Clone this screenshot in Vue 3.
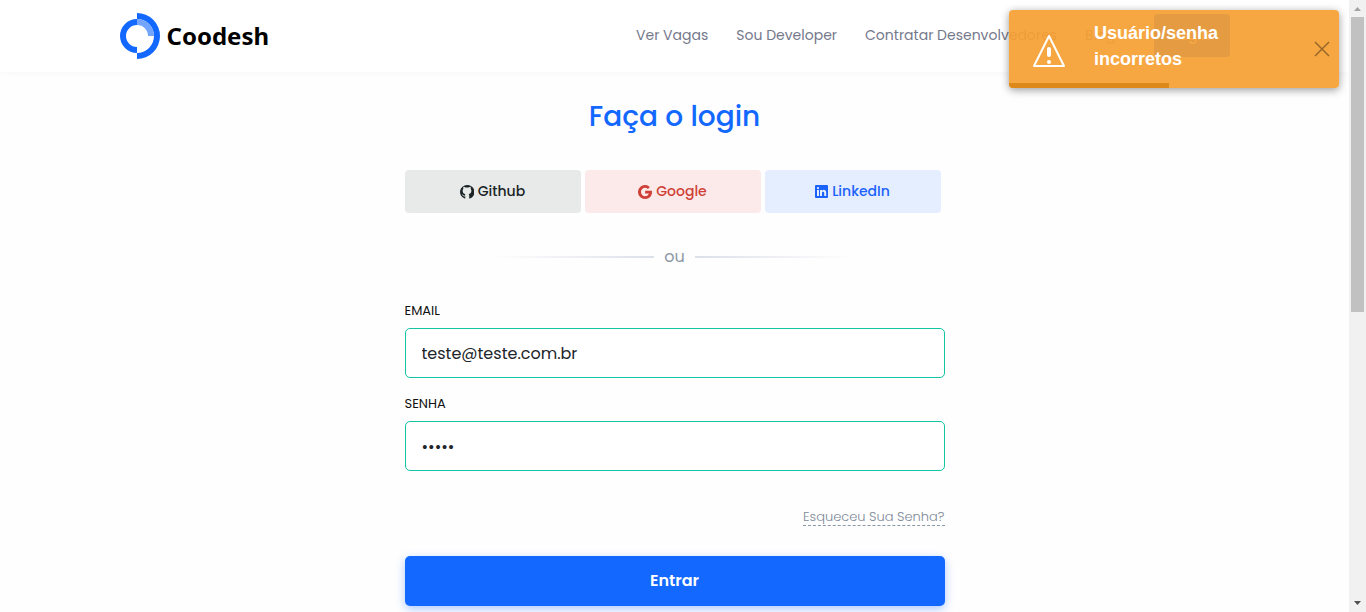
<script setup>
import { ref } from 'vue'

const email = ref('teste@teste.com.br')
const password = ref('teste')
const progress = ref(160 / 330)
const links = ['Ver Vagas', 'Sou Developer', 'Contratar Desenvolvedores', 'Blog']
const toastOpen = ref(true)
</script>

<template>
  <div class="window">
    <div class="page">
      <header class="header">
        <div class="container">
          <a class="brand" href="#">
            <svg class="brand-mark" width="40" height="46" viewBox="0 0 40 46" aria-hidden="true">
              <path d="M17 6A17 17 0 0 0 17 40V34A11 11 0 0 1 17 12Z" fill="#1268ff" />
              <path d="M17 0A23 23 0 0 1 17 46V40A17 17 0 0 0 17 6Z" fill="#1268ff" />
              <path d="M17 6A17 17 0 0 1 34 23H28A11 11 0 0 0 17 12Z" fill="#73a5ff" />
            </svg>
            <span>Coodesh</span>
          </a>
          <nav class="nav">
            <a v-for="link in links" :key="link" href="#">{{ link }}</a>
            <button class="login" type="button">Login</button>
          </nav>
        </div>
      </header>

      <main class="main">
        <h1>Faça o login</h1>
        <div class="social">
          <button class="github" type="button">
            <svg width="14" height="14" viewBox="0 0 24 24" aria-hidden="true">
              <path fill="currentColor" d="M12 0a12 12 0 0 0-4 23.3c.7.2 1-.3 1-.7v-4.100c-.5-1-.7-2 .2-3.100C6 15 4.500 13.400 4.500 9.800c0-1.300.5-2.500 1.300-3.400-.4-1-.3-2.400.2-3.300 1.200 0 2.500.7 3.400 1.300a11 11 0 0 1 5.200 0C15.500 3.800 16.800 3.100 18 3.100c.5.9.6 2.300.2 3.300.8.9 1.300 2.100 1.300 3.400 0 3.600-1.500 5.200-4.700 5.600.7.700 1 1.500 1 2.700v4.500c0 .4.300.9 1 .7A12 12 0 0 0 12 0Z" />
              <path d="M3.500 16.500c1.800.1 1.800 3.300 5.500 2.500" fill="none" stroke="#e7eae9" stroke-width="1.500" />
            </svg>
            Github
          </button>
          <button class="google" type="button">
            <svg width="14" height="14" viewBox="0 0 24 24" aria-hidden="true">
              <path fill="currentColor" d="M12.200 10v4.400h6.400c-.7 2.800-3 4.700-6.400 4.700a7.100 7.100 0 0 1 0-14.200c1.900 0 3.400.7 4.700 1.800l3.400-3.400A12 12 0 1 0 12.200 24C19.500 24 24 18.900 24 12c0-.7-.1-1.300-.2-2Z" />
            </svg>
            Google
          </button>
          <button class="linkedin" type="button">
            <svg width="13" height="13" viewBox="0 0 13 13" aria-hidden="true">
              <path fill="currentColor" fill-rule="evenodd" d="M1 0h11q1 0 1 1v11q0 1-1 1H1q-1 0-1-1V1q0-1 1-1ZM2 5v6h2V5ZM3 2a1.100 1.100 0 1 0 0 2.200A1.100 1.100 0 0 0 3 2ZM5 5v6h2V8c0-1.800 2.200-1.800 2.200 0v3h2V7.500c0-3-3.200-3.300-4.200-1.600V5Z" />
            </svg>
            LinkedIn
          </button>
        </div>
        <div class="divider"><span>ou</span></div>
        <form @submit.prevent>
          <label for="email">EMAIL</label>
          <input id="email" v-model="email" type="email" />
          <label for="password">SENHA</label>
          <input id="password" v-model="password" type="password" />
          <a class="forgot" href="#">Esqueceu Sua Senha?</a>
          <button class="submit" type="submit">Entrar</button>
        </form>
      </main>
    </div>

    <div class="scrollbar" aria-hidden="true">
      <svg width="17" height="17" viewBox="0 0 17 17"><path d="M5 11h7L8.500 7Z" fill="#a3a3a3" /></svg>
      <div class="track"><div class="thumb"></div></div>
      <svg width="17" height="17" viewBox="0 0 17 17"><path d="M5 6h7L8.500 10Z" fill="#505050" /></svg>
    </div>

    <div v-if="toastOpen" class="toast" role="alert">
      <svg class="warning" width="34" height="34" viewBox="0 0 34 34" aria-hidden="true">
        <path d="M17 2L32 32H2Z" fill="none" stroke="#fff" stroke-width="2" stroke-linejoin="round" />
        <path d="M17 15V21" stroke="#fff" stroke-width="4" stroke-linecap="round" />
        <circle cx="17" cy="28" r="2" fill="#fff" />
      </svg>
      <strong>Usuário/senha incorretos</strong>
      <button type="button" aria-label="Fechar" @click="toastOpen = false">
        <svg width="16" height="16" viewBox="0 0 16 16"><path d="M1 1L15 15M15 1L1 15" stroke="#986729" stroke-width="1.500" /></svg>
      </button>
      <div class="progress" :style="{ width: progress * 100 + '%' }"></div>
    </div>
  </div>
</template>

<style>
body {
  background: #fefefe;
}
</style>

<style scoped>
* {
  box-sizing: border-box;
}
.window {
  display: flex;
  height: 100vh;
  overflow: hidden;
  font-family: Poppins, Inter, "Open Sans", sans-serif;
  color: #212529;
}
a {
  color: inherit;
  text-decoration: none;
}
button {
  border: 0;
  font-family: inherit;
  cursor: pointer;
}
.page {
  flex: 1;
  min-width: 0;
}
.header {
  height: 72px;
  background: #fff;
  box-shadow: 0 0 8px rgba(0, 0, 0, 0.04);
}
.container {
  display: flex;
  align-items: center;
  justify-content: space-between;
  max-width: 1110px;
  height: 100%;
  margin: 0 auto;
}
.brand {
  display: flex;
  align-items: center;
  gap: 7px;
  font: 700 24px/40px "Noto Sans", "Open Sans", sans-serif;
  color: #000;
}
.nav {
  display: flex;
  align-items: center;
  gap: 28px;
  padding-bottom: 2px;
  font-size: 14px;
  color: #75798b;
  white-space: nowrap;
}
.login {
  width: 76px;
  height: 43px;
  margin-left: 10px;
  border-radius: 4px;
  background: #1268ff;
  color: #fff;
  font-size: 14px;
  font-weight: 500;
}
.main {
  max-width: 540px;
  margin: 0 auto;
  padding-top: 24px;
}
h1 {
  margin: 0;
  font-size: 28px;
  line-height: 42px;
  font-weight: 500;
  text-align: center;
  color: #1268ff;
}
.social {
  display: grid;
  grid-template-columns: repeat(3, 1fr);
  gap: 4px;
  margin-top: 32px;
  padding-right: 4px;
}
.social button {
  display: flex;
  align-items: center;
  justify-content: center;
  gap: 4px;
  height: 43px;
  padding: 0;
  border-radius: 4px;
  font-size: 14px;
  font-weight: 500;
}
.social .github {
  background: #e7eae9;
  color: #1b2426;
}
.social .google {
  background: #fceaea;
  color: #cf3f36;
}
.social .linkedin {
  background: #e5eeff;
  color: #1b62fb;
}
.divider {
  display: flex;
  align-items: center;
  justify-content: center;
  gap: 10px;
  margin-top: 32px;
  font-size: 16px;
  line-height: 24px;
  color: #8d98a5;
}
.divider::before,
.divider::after {
  content: "";
  width: 160px;
  height: 2px;
  background: linear-gradient(to left, #dce0e8, transparent);
}
.divider::after {
  background: linear-gradient(to right, #dce0e8, transparent);
}
form {
  display: flex;
  flex-direction: column;
  margin-top: 32px;
}
label {
  margin-bottom: 7px;
  font-size: 13px;
  line-height: 20px;
  font-weight: 400;
  color: #111;
}
input {
  width: 100%;
  height: 50px;
  margin-bottom: 16px;
  padding: 0 16px;
  border: 1px solid #13c4a3;
  border-radius: 5px;
  outline: 0;
  background: #fff;
  color: #212529;
  font-family: inherit;
  font-size: 16px;
}
.forgot {
  align-self: flex-end;
  margin-top: 22px;
  border-bottom: 1px dashed #8d98a5;
  font-size: 13px;
  line-height: 16px;
  font-weight: 300;
  color: #7d8997;
}
.submit {
  height: 50px;
  margin-top: 30px;
  padding-bottom: 2px;
  border-radius: 5px;
  background: #1268ff;
  box-shadow: 0 3px 10px rgba(18, 104, 255, 0.35);
  color: #fff;
  font-size: 16px;
  font-weight: 600;
}
.scrollbar {
  display: flex;
  flex-direction: column;
  width: 17px;
  background: #f1f1f1;
}
.track {
  flex: 1;
}
.thumb {
  height: 51%;
  margin: 0 2px;
  background: #c1c1c1;
}
.toast {
  position: absolute;
  top: 10px;
  right: 27px;
  display: flex;
  align-items: center;
  width: 330px;
  height: 78px;
  padding: 0 9px 6px 23px;
  overflow: hidden;
  border-radius: 4px;
  background: rgba(246, 160, 50, 0.92);
  box-shadow: 0 2px 8px rgba(0, 0, 0, 0.4);
}
.warning {
  flex: none;
  margin-top: 10px;
}
.toast strong {
  flex: 1;
  margin: 0 50px 0 28px;
  font: 700 18px/26px "Liberation Sans", sans-serif;
  color: #fff;
}
.toast button {
  display: flex;
  margin-top: 6px;
  padding: 0;
  background: none;
}
.progress {
  position: absolute;
  bottom: 0;
  left: 0;
  height: 5px;
  background: #dd891a;
}
</style>
